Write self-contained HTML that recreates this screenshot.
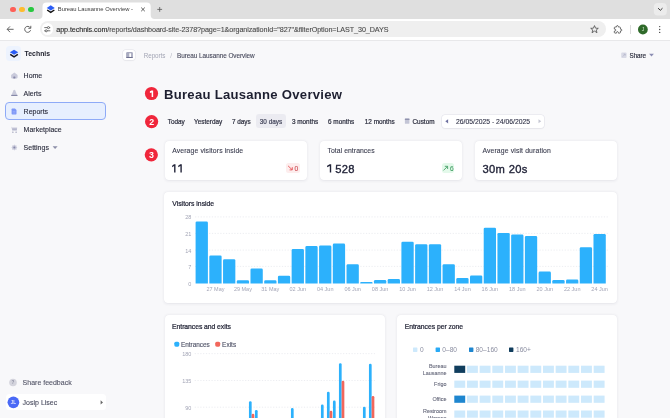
<!DOCTYPE html>
<html><head><meta charset="utf-8">
<style>
*{box-sizing:border-box;margin:0;padding:0}
html,body{width:670px;height:418px;overflow:hidden;background:#f8f8fa;font-family:"Liberation Sans",sans-serif}
#root{position:absolute;left:0;top:0;width:670px;height:418px;will-change:transform}
.a{position:absolute}
.card{position:absolute;background:#fff;border-radius:4px;box-shadow:0 0.8px 3px rgba(30,30,70,.085),0 0 1.2px rgba(30,30,70,.07)}
svg{position:absolute;left:0;top:0;overflow:visible}
</style></head><body><div id="root">

<div class="a" style="left:0px;top:0px;width:670px;height:19px;background:#dfdfdf;"></div>
<div class="a" style="left:10px;top:6.7px;width:5.6px;height:5.6px;background:#fe5f57;border-radius:50%"></div>
<div class="a" style="left:19.2px;top:6.7px;width:5.6px;height:5.6px;background:#febc2e;border-radius:50%"></div>
<div class="a" style="left:28.3px;top:6.7px;width:5.6px;height:5.6px;background:#28c840;border-radius:50%"></div>
<svg width="670" height="40"><path d="M38.5 19 Q42.5 19 42.5 15 V6.5 Q42.5 2.5 46.5 2.5 H146.7 Q150.7 2.5 150.7 6.5 V15 Q150.7 19 154.7 19 Z" fill="#fff"/></svg>
<svg width="670" height="40">
<g transform="translate(46,4.6) scale(0.95)"><path d="M5 0.8 L9.2 3.5 L5 6.2 L0.8 3.5 Z" fill="#2a5cf5"/><path d="M1.2 5.7 L5 8.1 L8.8 5.7" fill="none" stroke="#111" stroke-width="1.5"/></g>
<path d="M141.2 7.6 L144.8 11.2 M144.8 7.6 L141.2 11.2" stroke="#333" stroke-width="0.8"/>
<path d="M159.7 7 V11.8 M157.3 9.4 H162.1" stroke="#555" stroke-width="0.8"/>
<rect x="653.8" y="3" width="13" height="12.6" rx="4" fill="#ececec"/>
<path d="M658.1 8.2 L660.3 10.3 L662.5 8.2" fill="none" stroke="#333" stroke-width="1"/>
</svg>
<div class="a" style="left:122px;top:4px;width:14px;height:12px;background:linear-gradient(90deg,rgba(255,255,255,0),#fff 85%)"></div>
<div class="a" style="left:0px;top:19px;width:670px;height:22px;background:#fff;border-bottom:1px solid #e8e8ea"></div>
<div class="a" style="left:39.5px;top:21.3px;width:566px;height:15.6px;background:#efefef;border-radius:8px"></div>
<div class="a" style="left:41.6px;top:23.3px;width:11.6px;height:11.6px;background:#fff;border-radius:50%"></div>
<svg width="670" height="40">
<path d="M13.6 29.3 H7.2 M10 26.4 L7.2 29.3 L10 32.2" fill="none" stroke="#555" stroke-width="0.9"/>
<path d="M30.3 27.8 A3 3 0 1 0 30.6 30.2" fill="none" stroke="#555" stroke-width="0.9"/><path d="M30.8 25.8 V28.3 H28.3" fill="none" stroke="#555" stroke-width="0.9"/>
<path d="M44.3 27.6 H50.3 M44.3 30.8 H50.3" stroke="#444" stroke-width="0.75"/><circle cx="48.4" cy="27.6" r="1.05" fill="#fff" stroke="#444" stroke-width="0.7"/><circle cx="46.2" cy="30.8" r="1.05" fill="#fff" stroke="#444" stroke-width="0.7"/>
<path d="M594.5 25.6 L595.6 28.2 L598.3 28.3 L596.2 30 L597 32.7 L594.5 31.1 L592 32.7 L592.8 30 L590.7 28.3 L593.4 28.2 Z" fill="none" stroke="#444" stroke-width="0.75"/>
<g transform="translate(613.6,25.2) scale(0.36)"><path d="M20.5 11H19V7c0-1.1-.9-2-2-2h-4V3.5C13 2.12 11.88 1 10.5 1S8 2.12 8 3.5V5H4c-1.1 0-1.99.9-1.99 2v3.8H3.5c1.49 0 2.7 1.21 2.7 2.7s-1.21 2.7-2.7 2.7H2V20c0 1.1.9 2 2 2h3.8v-1.5c0-1.490 1.21-2.7 2.7-2.7 1.49 0 2.7 1.21 2.7 2.7V22H17c1.1 0 2-.9 2-2v-4h1.5c1.38 0 2.5-1.12 2.5-2.5S21.88 11 20.5 11z" fill="none" stroke="#444" stroke-width="2.1"/></g>
<rect x="630.2" y="25" width="0.8" height="9" fill="#d4d4d4"/>
<circle cx="642.9" cy="29.5" r="4.9" fill="#2f6a2a"/>
<circle cx="659.7" cy="26.6" r="0.7" fill="#444"/><circle cx="659.7" cy="29.5" r="0.7" fill="#444"/><circle cx="659.7" cy="32.4" r="0.7" fill="#444"/>
</svg>
<div class="a" style="left:5.9px;top:45.9px;width:15.3px;height:15.1px;background:#edf3fe;border-radius:3.5px"></div>
<div class="a" style="left:5.9px;top:393.9px;width:100.3px;height:16.6px;background:#fff;border-radius:3.5px"></div>
<div class="a" style="left:5.2px;top:102.2px;width:101px;height:18px;border-radius:4px;background:#e7effe;border:1px solid #8eaaf7"></div>
<svg width="670" height="418">
<g transform="translate(9.3,48.8) scale(0.95)"><path d="M5 0.9 L9.4 3.6 L5 6.3 L0.6 3.6 Z" fill="#2a5cf5"/><path d="M1.0 5.8 L5 8.4 L9.0 5.8" fill="none" stroke="#141420" stroke-width="1.6"/></g>
<path d="M14.35 72.6 L17.3 74.7 Q17.6 75 17.6 75.5 V77.6 Q17.6 78.4 16.8 78.4 H11.9 Q11.1 78.4 11.1 77.6 V75.5 Q11.1 75 11.4 74.7 Z" fill="#c9cadb"/><rect x="13.3" y="76.6" width="2.1" height="1.8" rx="0.5" fill="#8688a8"/>
<path d="M14.35 89.7 Q14.9 89.7 15.3 90.6 L17 94.8 H11.7 L13.4 90.6 Q13.8 89.7 14.35 89.7 Z" fill="#c9cadb"/><rect x="11.1" y="94.8" width="6.5" height="1.1" rx="0.4" fill="#8688a8"/>
<path d="M12.3 108.6 H15 L16.5 110.1 V113.8 Q16.5 114.5 15.8 114.5 H12.3 Q11.6 114.5 11.6 113.8 V109.3 Q11.6 108.6 12.3 108.6 Z" fill="#7d97f7"/><path d="M12.7 111.6 H15.4 M12.7 113 H15.4" stroke="#a9bbfa" stroke-width="0.5"/>
<path d="M11.2 126.4 L12 127.4 H17.2 L16.8 130.8 H12.3 Z" fill="#c9cadb"/><path d="M12.3 129.2 H16.8" stroke="#9a9cb8" stroke-width="0.6"/><circle cx="12.9" cy="132.2" r="0.6" fill="#8688a8"/><circle cx="16.1" cy="132.2" r="0.6" fill="#8688a8"/>
<path d="M14.35 144.6 L15.2 145.6 L16.6 145.4 L16.4 146.8 L17.3 147.6 L16.4 148.4 L16.6 149.8 L15.2 149.6 L14.35 150.6 L13.5 149.6 L12.1 149.8 L12.3 148.4 L11.4 147.6 L12.3 146.8 L12.1 145.4 L13.5 145.6 Z" fill="#c9cadb"/><circle cx="14.35" cy="147.6" r="1" fill="#8688a8"/>
<path d="M52.6 146.2 H57.6 L55.1 149 Z" fill="#8d8fa8"/>
<circle cx="13" cy="382.5" r="3.8" fill="#d4d4dd"/>
<circle cx="13.4" cy="402.3" r="5.85" fill="#4a69f6"/>
<path d="M100.6 400.3 L103 402.4 L100.6 404.5 Z" fill="#666"/>
</svg>
<div class="a" style="left:123.2px;top:49.6px;width:12.3px;height:10.9px;background:#fff;border-radius:2.5px;box-shadow:0 0 0 0.5px #e2e2e8,0 0.6px 1.5px rgba(0,0,0,.08)"></div>
<svg width="670" height="418">
<rect x="126.1" y="52" width="6.8" height="5.9" rx="1.3" fill="#a9abc0"/><rect x="126.1" y="56.9" width="6.8" height="1" rx="0.5" fill="#6f7190"/><rect x="129.3" y="53.3" width="1.8" height="3.6" rx="0.4" fill="#fff"/>
<rect x="621.2" y="52.5" width="5.4" height="5.5" rx="1" fill="#d9dae6"/><path d="M622.7 56.6 L625.2 54 M623.5 54 H625.2 V55.7" fill="none" stroke="#a9abc0" stroke-width="0.5"/>
<path d="M649.1 53.7 H653.9 L651.5 56.6 Z" fill="#8b8db3"/>
</svg>
<svg width="670" height="418">
<circle cx="151.5" cy="93.5" r="6.6" fill="#f0263b"/>
<circle cx="151.6" cy="121.6" r="6.6" fill="#f0263b"/>
<circle cx="151.3" cy="154.8" r="6.6" fill="#f0263b"/>
</svg>
<svg width="670" height="418"><path d="M153.15 90.60 V96.90 H151.65 V92.40 L149.90 92.93 V91.28 L151.55 90.60 Z" fill="#fff"/></svg>
<div class="a" style="left:256.3px;top:114px;width:29.6px;height:14.3px;background:#ebebf1;border-radius:3px"></div>
<svg width="670" height="418">
<rect x="404.9" y="118.6" width="4.5" height="5.2" rx="0.6" fill="#c3c5d6"/><rect x="404.9" y="118.6" width="4.5" height="1.4" fill="#9092ad"/>
</svg>
<div class="a" style="left:441.5px;top:114.5px;width:102.4px;height:13.6px;background:#fff;border-radius:3px;box-shadow:0 0 0 0.6px #e2e2ea,0 0.6px 1.5px rgba(0,0,0,.06)"></div>
<svg width="670" height="418">
<path d="M448.1 119.2 V123.4 L445.3 121.3 Z" fill="#6d70a0"/>
<path d="M538.5 119.3 V123.3 L541.2 121.3 Z" fill="#c4c6d2"/>
</svg>
<div class="card" style="left:164.5px;top:140.6px;width:142.5px;height:39.1px"></div>
<div class="card" style="left:320px;top:140.6px;width:142px;height:39.1px"></div>
<div class="card" style="left:475px;top:140.6px;width:142.2px;height:39.1px"></div>
<svg width="670" height="418"><path d="M175.50 164.30 V172.60 H174.10 V165.98 L172.10 167.37 V165.83 L174.00 164.30 Z" fill="#23253a"/><path d="M181.80 164.30 V172.60 H180.40 V165.98 L178.20 167.37 V165.83 L180.30 164.30 Z" fill="#23253a"/></svg>
<svg width="670" height="418"><path d="M331.20 164.30 V172.60 H329.80 V165.98 L327.10 167.37 V165.83 L329.70 164.30 Z" fill="#23253a"/></svg>
<div class="a" style="left:286.4px;top:163.1px;width:13.5px;height:9.7px;background:#fdeded;border-radius:2.5px"></div>
<div class="a" style="left:441.6px;top:163px;width:12.9px;height:10px;background:#e3f9ea;border-radius:2.5px"></div>
<svg width="670" height="418">
<path d="M288.1 165.9 L292 169.6 M292.3 167.2 V169.9 H289.6" fill="none" stroke="#e5484d" stroke-width="0.85"/>
<path d="M443.5 170.4 L447.4 166.5 M444.8 166.3 H447.6 V169" fill="none" stroke="#3c9a5f" stroke-width="0.85"/>
</svg>
<div class="card" style="left:164.4px;top:191.7px;width:452.4px;height:110.9px"></div>
<svg width="670" height="418">
<line x1="195.1" y1="216.9" x2="607.8" y2="216.9" stroke="#dfe0e8" stroke-width="0.6" stroke-dasharray="1.2 1.6"/>
<line x1="195.1" y1="233.4" x2="607.8" y2="233.4" stroke="#dfe0e8" stroke-width="0.6" stroke-dasharray="1.2 1.6"/>
<line x1="195.1" y1="250.1" x2="607.8" y2="250.1" stroke="#dfe0e8" stroke-width="0.6" stroke-dasharray="1.2 1.6"/>
<line x1="195.1" y1="266.4" x2="607.8" y2="266.4" stroke="#dfe0e8" stroke-width="0.6" stroke-dasharray="1.2 1.6"/>
<path d="M195.60 283.50 V222.80 Q195.60 221.50 196.90 221.50 H206.60 Q207.90 221.50 207.90 222.80 V283.50 Z" fill="#2cb1fc"/>
<path d="M209.32 283.50 V256.80 Q209.32 255.50 210.62 255.50 H220.32 Q221.62 255.50 221.62 256.80 V283.50 Z" fill="#2cb1fc"/>
<path d="M223.04 283.50 V260.60 Q223.04 259.30 224.34 259.30 H234.04 Q235.34 259.30 235.34 260.60 V283.50 Z" fill="#2cb1fc"/>
<path d="M236.76 283.50 V281.50 Q236.76 280.20 238.06 280.20 H247.76 Q249.06 280.20 249.06 281.50 V283.50 Z" fill="#2cb1fc"/>
<path d="M250.48 283.50 V269.80 Q250.48 268.50 251.78 268.50 H261.48 Q262.78 268.50 262.78 269.80 V283.50 Z" fill="#2cb1fc"/>
<path d="M264.20 283.50 V281.50 Q264.20 280.20 265.50 280.20 H275.20 Q276.50 280.20 276.50 281.50 V283.50 Z" fill="#2cb1fc"/>
<path d="M277.92 283.50 V277.10 Q277.92 275.80 279.22 275.80 H288.92 Q290.22 275.80 290.22 277.10 V283.50 Z" fill="#2cb1fc"/>
<path d="M291.64 283.50 V250.40 Q291.64 249.10 292.94 249.10 H302.64 Q303.94 249.10 303.94 250.40 V283.50 Z" fill="#2cb1fc"/>
<path d="M305.36 283.50 V247.40 Q305.36 246.10 306.66 246.10 H316.36 Q317.66 246.10 317.66 247.40 V283.50 Z" fill="#2cb1fc"/>
<path d="M319.08 283.50 V246.70 Q319.08 245.40 320.38 245.40 H330.08 Q331.38 245.40 331.38 246.70 V283.50 Z" fill="#2cb1fc"/>
<path d="M332.80 283.50 V244.90 Q332.80 243.60 334.10 243.60 H343.80 Q345.10 243.60 345.10 244.90 V283.50 Z" fill="#2cb1fc"/>
<path d="M346.52 283.50 V265.60 Q346.52 264.30 347.82 264.30 H357.52 Q358.82 264.30 358.82 265.60 V283.50 Z" fill="#2cb1fc"/>
<path d="M360.24 283.50 V282.70 Q360.24 281.90 361.04 281.90 H371.74 Q372.54 281.90 372.54 282.70 V283.50 Z" fill="#2cb1fc"/>
<path d="M373.96 283.50 V281.30 Q373.96 280.00 375.26 280.00 H384.96 Q386.26 280.00 386.26 281.30 V283.50 Z" fill="#2cb1fc"/>
<path d="M387.68 283.50 V280.30 Q387.68 279.00 388.98 279.00 H398.68 Q399.98 279.00 399.98 280.30 V283.50 Z" fill="#2cb1fc"/>
<path d="M401.40 283.50 V243.10 Q401.40 241.80 402.70 241.80 H412.40 Q413.70 241.80 413.70 243.10 V283.50 Z" fill="#2cb1fc"/>
<path d="M415.12 283.50 V245.60 Q415.12 244.30 416.42 244.30 H426.12 Q427.42 244.30 427.42 245.60 V283.50 Z" fill="#2cb1fc"/>
<path d="M428.84 283.50 V245.60 Q428.84 244.30 430.14 244.30 H439.84 Q441.14 244.30 441.14 245.60 V283.50 Z" fill="#2cb1fc"/>
<path d="M442.56 283.50 V265.60 Q442.56 264.30 443.86 264.30 H453.56 Q454.86 264.30 454.86 265.60 V283.50 Z" fill="#2cb1fc"/>
<path d="M456.28 283.50 V279.40 Q456.28 278.10 457.58 278.10 H467.28 Q468.58 278.10 468.58 279.40 V283.50 Z" fill="#2cb1fc"/>
<path d="M470.00 283.50 V276.70 Q470.00 275.40 471.30 275.40 H481.00 Q482.30 275.40 482.30 276.70 V283.50 Z" fill="#2cb1fc"/>
<path d="M483.72 283.50 V229.10 Q483.72 227.80 485.02 227.80 H494.72 Q496.02 227.80 496.02 229.10 V283.50 Z" fill="#2cb1fc"/>
<path d="M497.44 283.50 V234.30 Q497.44 233.00 498.74 233.00 H508.44 Q509.74 233.00 509.74 234.30 V283.50 Z" fill="#2cb1fc"/>
<path d="M511.16 283.50 V235.70 Q511.16 234.40 512.46 234.40 H522.16 Q523.46 234.40 523.46 235.70 V283.50 Z" fill="#2cb1fc"/>
<path d="M524.88 283.50 V237.40 Q524.88 236.10 526.18 236.10 H535.88 Q537.18 236.10 537.18 237.40 V283.50 Z" fill="#2cb1fc"/>
<path d="M538.60 283.50 V272.90 Q538.60 271.60 539.90 271.60 H549.60 Q550.90 271.60 550.90 272.90 V283.50 Z" fill="#2cb1fc"/>
<path d="M552.32 283.50 V281.30 Q552.32 280.00 553.62 280.00 H563.32 Q564.62 280.00 564.62 281.30 V283.50 Z" fill="#2cb1fc"/>
<path d="M566.04 283.50 V280.70 Q566.04 279.40 567.34 279.40 H577.04 Q578.34 279.40 578.34 280.70 V283.50 Z" fill="#2cb1fc"/>
<path d="M579.76 283.50 V248.50 Q579.76 247.20 581.06 247.20 H590.76 Q592.06 247.20 592.06 248.50 V283.50 Z" fill="#2cb1fc"/>
<path d="M593.48 283.50 V235.30 Q593.48 234.00 594.78 234.00 H604.48 Q605.78 234.00 605.78 235.30 V283.50 Z" fill="#2cb1fc"/>
</svg>
<div class="card" style="left:164.7px;top:314.8px;width:220px;height:120px"></div>
<svg width="670" height="418">
<rect x="174.3" y="341.7" width="5" height="5" rx="1.6" fill="#2cb1fc"/>
<rect x="215.2" y="341.7" width="5" height="5" rx="1.6" fill="#f2675c"/>
<line x1="194.7" y1="353.6" x2="374.9" y2="353.6" stroke="#dfe0e8" stroke-width="0.6" stroke-dasharray="1.2 1.6"/>
<line x1="194.7" y1="380.5" x2="374.9" y2="380.5" stroke="#dfe0e8" stroke-width="0.6" stroke-dasharray="1.2 1.6"/>
<line x1="194.7" y1="407.2" x2="374.9" y2="407.2" stroke="#dfe0e8" stroke-width="0.6" stroke-dasharray="1.2 1.6"/>
<line x1="194.7" y1="434" x2="374.9" y2="434" stroke="#dfe0e8" stroke-width="0.6" stroke-dasharray="1.2 1.6"/>
<path d="M248.95 430.00 V402.50 Q248.95 401.20 250.25 401.20 H250.35 Q251.65 401.20 251.65 402.50 V430.00 Z" fill="#2cb1fc"/>
<path d="M251.65 430.00 V415.00 Q251.65 413.70 252.95 413.70 H253.05 Q254.35 413.70 254.35 415.00 V430.00 Z" fill="#f2675c"/>
<path d="M254.95 430.00 V411.30 Q254.95 410.00 256.25 410.00 H256.35 Q257.65 410.00 257.65 411.30 V430.00 Z" fill="#2cb1fc"/>
<path d="M290.95 430.00 V409.40 Q290.95 408.10 292.25 408.10 H292.35 Q293.65 408.10 293.65 409.40 V430.00 Z" fill="#2cb1fc"/>
<path d="M320.95 430.00 V405.80 Q320.95 404.50 322.25 404.50 H322.35 Q323.65 404.50 323.65 405.80 V430.00 Z" fill="#2cb1fc"/>
<path d="M326.95 430.00 V393.00 Q326.95 391.70 328.25 391.70 H328.35 Q329.65 391.70 329.65 393.00 V430.00 Z" fill="#2cb1fc"/>
<path d="M329.65 430.00 V412.00 Q329.65 410.70 330.95 410.70 H331.05 Q332.35 410.70 332.35 412.00 V430.00 Z" fill="#f2675c"/>
<path d="M332.95 430.00 V401.90 Q332.95 400.60 334.25 400.60 H334.35 Q335.65 400.60 335.65 401.90 V430.00 Z" fill="#2cb1fc"/>
<path d="M338.95 430.00 V364.60 Q338.95 363.30 340.25 363.30 H340.35 Q341.65 363.30 341.65 364.60 V430.00 Z" fill="#2cb1fc"/>
<path d="M341.65 430.00 V382.00 Q341.65 380.70 342.95 380.70 H343.05 Q344.35 380.70 344.35 382.00 V430.00 Z" fill="#f2675c"/>
<path d="M362.95 430.00 V408.10 Q362.95 406.80 364.25 406.80 H364.35 Q365.65 406.80 365.65 408.10 V430.00 Z" fill="#2cb1fc"/>
<path d="M368.95 430.00 V365.00 Q368.95 363.70 370.25 363.70 H370.35 Q371.65 363.70 371.65 365.00 V430.00 Z" fill="#2cb1fc"/>
<path d="M371.65 430.00 V397.30 Q371.65 396.00 372.95 396.00 H373.05 Q374.35 396.00 374.35 397.30 V430.00 Z" fill="#f2675c"/>
</svg>
<div class="card" style="left:397px;top:314.7px;width:220px;height:120px"></div>
<svg width="670" height="418">
<rect x="413" y="347.5" width="4.4" height="4.4" rx="0.6" fill="#cde9fc"/>
<rect x="435.6" y="347.5" width="4.4" height="4.4" rx="0.6" fill="#29aaf6"/>
<rect x="469" y="347.5" width="4.4" height="4.4" rx="0.6" fill="#1e86cf"/>
<rect x="509" y="347.5" width="4.4" height="4.4" rx="0.6" fill="#103d5d"/>
<rect x="454.30" y="365.7" width="10.9" height="7.2" fill="#103d5d"/>
<rect x="466.97" y="365.7" width="10.9" height="7.2" fill="#cde9fc"/>
<rect x="479.64" y="365.7" width="10.9" height="7.2" fill="#cde9fc"/>
<rect x="492.31" y="365.7" width="10.9" height="7.2" fill="#cde9fc"/>
<rect x="504.98" y="365.7" width="10.9" height="7.2" fill="#cde9fc"/>
<rect x="517.65" y="365.7" width="10.9" height="7.2" fill="#cde9fc"/>
<rect x="530.32" y="365.7" width="10.9" height="7.2" fill="#cde9fc"/>
<rect x="542.99" y="365.7" width="10.9" height="7.2" fill="#cde9fc"/>
<rect x="555.66" y="365.7" width="10.9" height="7.2" fill="#cde9fc"/>
<rect x="568.33" y="365.7" width="10.9" height="7.2" fill="#cde9fc"/>
<rect x="581.00" y="365.7" width="10.9" height="7.2" fill="#cde9fc"/>
<rect x="593.67" y="365.7" width="10.9" height="7.2" fill="#cde9fc"/>
<rect x="454.30" y="380.6" width="10.9" height="7.2" fill="#cde9fc"/>
<rect x="466.97" y="380.6" width="10.9" height="7.2" fill="#cde9fc"/>
<rect x="479.64" y="380.6" width="10.9" height="7.2" fill="#cde9fc"/>
<rect x="492.31" y="380.6" width="10.9" height="7.2" fill="#cde9fc"/>
<rect x="504.98" y="380.6" width="10.9" height="7.2" fill="#cde9fc"/>
<rect x="517.65" y="380.6" width="10.9" height="7.2" fill="#cde9fc"/>
<rect x="530.32" y="380.6" width="10.9" height="7.2" fill="#cde9fc"/>
<rect x="542.99" y="380.6" width="10.9" height="7.2" fill="#cde9fc"/>
<rect x="555.66" y="380.6" width="10.9" height="7.2" fill="#cde9fc"/>
<rect x="568.33" y="380.6" width="10.9" height="7.2" fill="#cde9fc"/>
<rect x="581.00" y="380.6" width="10.9" height="7.2" fill="#cde9fc"/>
<rect x="593.67" y="380.6" width="10.9" height="7.2" fill="#cde9fc"/>
<rect x="454.30" y="395.6" width="10.9" height="7.2" fill="#1e86cf"/>
<rect x="466.97" y="395.6" width="10.9" height="7.2" fill="#cde9fc"/>
<rect x="479.64" y="395.6" width="10.9" height="7.2" fill="#cde9fc"/>
<rect x="492.31" y="395.6" width="10.9" height="7.2" fill="#cde9fc"/>
<rect x="504.98" y="395.6" width="10.9" height="7.2" fill="#cde9fc"/>
<rect x="517.65" y="395.6" width="10.9" height="7.2" fill="#cde9fc"/>
<rect x="530.32" y="395.6" width="10.9" height="7.2" fill="#cde9fc"/>
<rect x="542.99" y="395.6" width="10.9" height="7.2" fill="#cde9fc"/>
<rect x="555.66" y="395.6" width="10.9" height="7.2" fill="#cde9fc"/>
<rect x="568.33" y="395.6" width="10.9" height="7.2" fill="#cde9fc"/>
<rect x="581.00" y="395.6" width="10.9" height="7.2" fill="#cde9fc"/>
<rect x="593.67" y="395.6" width="10.9" height="7.2" fill="#cde9fc"/>
<rect x="454.30" y="410.5" width="10.9" height="7.2" fill="#cde9fc"/>
<rect x="466.97" y="410.5" width="10.9" height="7.2" fill="#cde9fc"/>
<rect x="479.64" y="410.5" width="10.9" height="7.2" fill="#cde9fc"/>
<rect x="492.31" y="410.5" width="10.9" height="7.2" fill="#cde9fc"/>
<rect x="504.98" y="410.5" width="10.9" height="7.2" fill="#cde9fc"/>
<rect x="517.65" y="410.5" width="10.9" height="7.2" fill="#cde9fc"/>
<rect x="530.32" y="410.5" width="10.9" height="7.2" fill="#cde9fc"/>
<rect x="542.99" y="410.5" width="10.9" height="7.2" fill="#cde9fc"/>
<rect x="555.66" y="410.5" width="10.9" height="7.2" fill="#cde9fc"/>
<rect x="568.33" y="410.5" width="10.9" height="7.2" fill="#cde9fc"/>
<rect x="581.00" y="410.5" width="10.9" height="7.2" fill="#cde9fc"/>
<rect x="593.67" y="410.5" width="10.9" height="7.2" fill="#cde9fc"/>
</svg>
<svg width="670" height="418" font-family="Liberation Sans"><text x="57.8" y="11.2" font-size="5.8" fill="#3a3a3a">Bureau Lausanne Overview -</text>
<text x="642.9" y="31.3" text-anchor="middle" font-size="4.8" fill="#d8ecd5">J</text>
<text x="56.3" y="32.1" font-size="7.2" letter-spacing="-0.09" fill="#4a4a4a" stroke="#4a4a4a" stroke-width="0.1"><tspan fill="#1f1f1f" stroke="#1f1f1f">app.technis.com</tspan>/reports/dashboard-site-2378?page=1&amp;organizationId="827"&amp;filterOption=LAST_30_DAYS</text>
<text x="24.6" y="56" font-weight="700" font-size="6.9" fill="#1b1c29">Technis</text>
<text x="23.6" y="78" stroke="#2b2d3d" stroke-width="0.12" font-size="7" fill="#2b2d3d">Home</text>
<text x="23.6" y="96" stroke="#2b2d3d" stroke-width="0.12" font-size="7" fill="#2b2d3d">Alerts</text>
<text x="23.6" y="114" stroke="#2b2d3d" stroke-width="0.12" font-size="7" fill="#2b2d3d">Reports</text>
<text x="23.6" y="132" stroke="#2b2d3d" stroke-width="0.12" font-size="7" fill="#2b2d3d">Marketplace</text>
<text x="23.6" y="150" stroke="#2b2d3d" stroke-width="0.12" font-size="7" fill="#2b2d3d">Settings</text>
<text x="13" y="384.3" text-anchor="middle" font-weight="700" font-size="4.6" fill="#8e90a2">?</text>
<text x="22.6" y="385" stroke="#525466" stroke-width="0.1" font-size="7" fill="#525466">Share feedback</text>
<text x="13.3" y="404.2" text-anchor="middle" letter-spacing="-0.15" stroke="#e8ecff" stroke-width="0.1" font-size="4.9" fill="#e8ecff">JL</text>
<text x="22.6" y="405" stroke="#4b4d60" stroke-width="0.1" font-size="7" fill="#4b4d60">Josip Lisec</text>
<text x="143.7" y="58" letter-spacing="-0.05" font-size="6.3" fill="#a3a5b5">Reports</text>
<text x="170.3" y="58" font-size="6.4" fill="#b4b6c3">/</text>
<text x="177" y="58" letter-spacing="-0.05" stroke="#45475a" stroke-width="0.1" font-size="6.4" fill="#45475a">Bureau Lausanne Overview</text>
<text x="629.5" y="58" letter-spacing="-0.05" stroke="#2a2c3c" stroke-width="0.15" font-size="6.3" fill="#2a2c3c">Share</text>
<text x="151.79999999999998" y="124.8" text-anchor="middle" font-weight="700" font-size="8.8" fill="#fff">2</text>
<text x="151.4" y="158.0" text-anchor="middle" font-weight="700" font-size="8.8" fill="#fff">3</text>
<text x="164" y="99" letter-spacing="0.27" font-weight="700" font-size="13.1" fill="#1d1f30">Bureau Lausanne Overview</text>
<text x="167.7" y="124" stroke="#2a2c3c" stroke-width="0.2" font-size="6.4" fill="#2a2c3c">Today</text>
<text x="194" y="124" stroke="#2a2c3c" stroke-width="0.2" font-size="6.4" fill="#2a2c3c">Yesterday</text>
<text x="231.9" y="124" stroke="#2a2c3c" stroke-width="0.2" font-size="6.4" fill="#2a2c3c">7 days</text>
<text x="259.8" y="124" stroke="#45475c" stroke-width="0.2" font-size="6.4" fill="#45475c">30 days</text>
<text x="291.9" y="124" stroke="#2a2c3c" stroke-width="0.2" font-size="6.4" fill="#2a2c3c">3 months</text>
<text x="328" y="124" stroke="#2a2c3c" stroke-width="0.2" font-size="6.4" fill="#2a2c3c">6 months</text>
<text x="364.8" y="124" stroke="#2a2c3c" stroke-width="0.2" font-size="6.4" fill="#2a2c3c">12 months</text>
<text x="412.5" y="124" stroke="#2a2c3c" stroke-width="0.2" font-size="6.4" fill="#2a2c3c">Custom</text>
<text x="456" y="124" stroke="#33354a" stroke-width="0.12" font-size="6.8" fill="#33354a">26/05/2025 - 24/06/2025</text>
<text x="172.2" y="153" letter-spacing="0.12" stroke="#3a3c4e" stroke-width="0.1" font-size="6.85" fill="#3a3c4e">Average visitors inside</text>
<text x="327.5" y="153" letter-spacing="0.05" stroke="#3a3c4e" stroke-width="0.1" font-size="6.85" fill="#3a3c4e">Total entrances</text>
<text x="482.4" y="153" letter-spacing="0.13" stroke="#3a3c4e" stroke-width="0.1" font-size="6.85" fill="#3a3c4e">Average visit duration</text>
<text x="335.2" y="173" letter-spacing="0.3" stroke="#23253a" stroke-width="0.35" font-size="11.2" fill="#23253a">528</text>
<text x="482.4" y="173" letter-spacing="0.35" stroke="#23253a" stroke-width="0.35" font-size="11.2" fill="#23253a">30m 20s</text>
<text x="294.6" y="170.9" stroke="#c9474f" stroke-width="0.1" font-size="6.5" fill="#c9474f">0</text>
<text x="449.9" y="170.9" stroke="#3c9a5f" stroke-width="0.1" font-size="6.5" fill="#3c9a5f">6</text>
<text x="172.3" y="206" stroke="#1f2133" stroke-width="0.22" font-size="6.8" fill="#1f2133">Visitors inside</text>
<text x="191.4" y="219.4" text-anchor="end" font-size="5.5" fill="#a3a5b6">28</text>
<text x="191.4" y="235.9" text-anchor="end" font-size="5.5" fill="#a3a5b6">21</text>
<text x="191.4" y="252.6" text-anchor="end" font-size="5.5" fill="#a3a5b6">14</text>
<text x="191.4" y="268.9" text-anchor="end" font-size="5.5" fill="#a3a5b6">7</text>
<text x="191.4" y="286.0" text-anchor="end" font-size="5.5" fill="#a3a5b6">0</text>
<text x="215.47" y="291.2" text-anchor="middle" font-size="5.5" fill="#a3a5b6">27 May</text>
<text x="242.91" y="291.2" text-anchor="middle" font-size="5.5" fill="#a3a5b6">29 May</text>
<text x="270.35" y="291.2" text-anchor="middle" font-size="5.5" fill="#a3a5b6">31 May</text>
<text x="297.79" y="291.2" text-anchor="middle" font-size="5.5" fill="#a3a5b6">02 Jun</text>
<text x="325.23" y="291.2" text-anchor="middle" font-size="5.5" fill="#a3a5b6">04 Jun</text>
<text x="352.67" y="291.2" text-anchor="middle" font-size="5.5" fill="#a3a5b6">06 Jun</text>
<text x="380.11" y="291.2" text-anchor="middle" font-size="5.5" fill="#a3a5b6">08 Jun</text>
<text x="407.55" y="291.2" text-anchor="middle" font-size="5.5" fill="#a3a5b6">10 Jun</text>
<text x="434.99" y="291.2" text-anchor="middle" font-size="5.5" fill="#a3a5b6">12 Jun</text>
<text x="462.43" y="291.2" text-anchor="middle" font-size="5.5" fill="#a3a5b6">14 Jun</text>
<text x="489.87" y="291.2" text-anchor="middle" font-size="5.5" fill="#a3a5b6">16 Jun</text>
<text x="517.31" y="291.2" text-anchor="middle" font-size="5.5" fill="#a3a5b6">18 Jun</text>
<text x="544.75" y="291.2" text-anchor="middle" font-size="5.5" fill="#a3a5b6">20 Jun</text>
<text x="572.19" y="291.2" text-anchor="middle" font-size="5.5" fill="#a3a5b6">22 Jun</text>
<text x="599.63" y="291.2" text-anchor="middle" font-size="5.5" fill="#a3a5b6">24 Jun</text>
<text x="172.1" y="329" letter-spacing="-0.05" stroke="#1f2133" stroke-width="0.22" font-size="6.8" fill="#1f2133">Entrances and exits</text>
<text x="191.4" y="356.1" text-anchor="end" font-size="5.5" fill="#a3a5b6">180</text>
<text x="191.4" y="383.0" text-anchor="end" font-size="5.5" fill="#a3a5b6">135</text>
<text x="191.4" y="409.7" text-anchor="end" font-size="5.5" fill="#a3a5b6">90</text>
<text x="191.4" y="436.5" text-anchor="end" font-size="5.5" fill="#a3a5b6">45</text>
<text x="181" y="346.6" letter-spacing="-0.02" stroke="#55586c" stroke-width="0.15" font-size="6.4" fill="#55586c">Entrances</text>
<text x="222.1" y="346.6" letter-spacing="0.05" stroke="#55586c" stroke-width="0.15" font-size="6.4" fill="#55586c">Exits</text>
<text x="404.7" y="329" letter-spacing="-0.03" stroke="#1f2133" stroke-width="0.22" font-size="6.8" fill="#1f2133">Entrances per zone</text>
<text x="420.1" y="352" letter-spacing="0.02" font-size="6.6" fill="#8a8da0">0</text>
<text x="442.3" y="352" letter-spacing="0.02" font-size="6.6" fill="#8a8da0">0–80</text>
<text x="475.7" y="352" letter-spacing="0.02" font-size="6.6" fill="#8a8da0">80–160</text>
<text x="516" y="352" letter-spacing="0.02" font-size="6.6" fill="#8a8da0">160+</text>
<text x="446.4" y="368.1" text-anchor="end" stroke="#5f6275" stroke-width="0.08" font-size="5.4" fill="#5f6275">Bureau</text>
<text x="446.4" y="375" text-anchor="end" stroke="#5f6275" stroke-width="0.08" font-size="5.4" fill="#5f6275">Lausanne</text>
<text x="446.4" y="386.4" text-anchor="end" stroke="#5f6275" stroke-width="0.08" font-size="5.4" fill="#5f6275">Frigo</text>
<text x="446.4" y="401.4" text-anchor="end" stroke="#5f6275" stroke-width="0.08" font-size="5.4" fill="#5f6275">Office</text>
<text x="446.4" y="413" text-anchor="end" stroke="#5f6275" stroke-width="0.08" font-size="5.4" fill="#5f6275">Restroom</text>
<text x="446.4" y="420" text-anchor="end" stroke="#5f6275" stroke-width="0.08" font-size="5.4" fill="#5f6275">Women</text></svg>
</div></body></html>
